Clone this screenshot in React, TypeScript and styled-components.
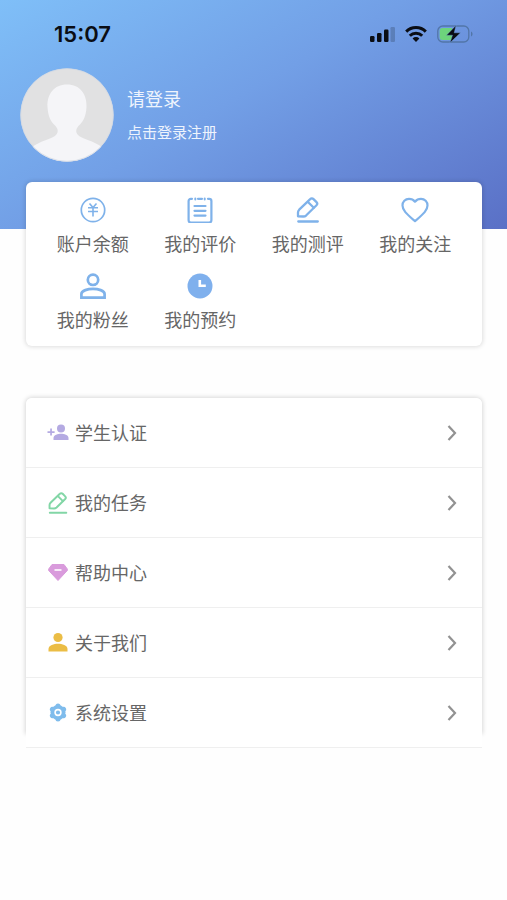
import React from "react";
import styled, { createGlobalStyle } from "styled-components";

const GlobalStyle = createGlobalStyle`
  * { box-sizing: border-box; }
  body {
    margin: 0;
    background: #fefefe;
    color: #666;
    font-family: "Liberation Sans", "Noto Sans CJK SC", sans-serif;
  }
  button { font: inherit; color: inherit; border: 0; padding: 0; background: none; cursor: pointer; }
  svg { display: block; flex: none; }
`;

const Page = styled.main`
  min-height: 100vh;
`;

const Header = styled.header`
  height: 229px;
  background: linear-gradient(150deg, #7fbff8 0%, #729fe6 45%, #5a70c6 100%);
`;

const StatusBar = styled.div`
  display: flex;
  align-items: center;
  justify-content: space-between;
  height: 68px;
  padding: 0 34px 0 54px;
  color: #0a0d14;
`;

const Clock = styled.time`
  font-family: Inter, sans-serif;
  font-size: 22px;
  font-weight: 600;
  line-height: 24px;
`;

const StatusIcons = styled.div`
  display: flex;
  align-items: center;
  gap: 10px;
`;

const Profile = styled.button`
  display: flex;
  align-items: center;
  gap: 13px;
  margin-left: 20px;
  text-align: left;
`;

const ProfileText = styled.span`
  display: flex;
  flex-direction: column;
  gap: 8px;
  padding-top: 2px;
  color: #eef4fd;
`;

const ProfileName = styled.span`
  font-size: 18px;
  line-height: 26px;
`;

const ProfileHint = styled.span`
  font-size: 15px;
  line-height: 24px;
`;

const ShortcutCard = styled.nav`
  display: grid;
  grid-template-columns: repeat(4, 1fr);
  row-gap: 16px;
  margin: -47px 25px 0 26px;
  padding: 15px 13px 13px;
  border-radius: 6px;
  background: #fff;
  box-shadow: 0 0 4px 1px rgba(0, 0, 0, 0.13);
`;

const Shortcut = styled.button`
  display: flex;
  flex-direction: column;
  align-items: center;
  gap: 10px;
  font-size: 18px;
  line-height: 24px;
  white-space: nowrap;
`;

const Menu = styled.nav`
  position: relative;
  margin: 52px 25px 0 26px;

  &::before {
    content: "";
    position: absolute;
    inset: 0 0 15px;
    border-radius: 6px 6px 0 0;
    box-shadow: 0 0 4px 1px rgba(0, 0, 0, 0.15);
  }
`;

const MenuList = styled.ul`
  position: relative;
  margin: 0;
  padding: 0;
  list-style: none;
  border-radius: 6px 6px 0 0;
  background: #fff;
`;

const MenuItem = styled.li`
  border-bottom: 1px solid #efefef;
`;

const MenuButton = styled.button`
  display: flex;
  align-items: center;
  gap: 6px;
  width: 100%;
  height: 69px;
  padding: 0 24px 0 21px;
  font-size: 18px;
  line-height: 24px;
  text-align: left;
`;

const MenuLabel = styled.span`
  flex: 1;
  padding-top: 2px;
`;

const BLUE = "#7fb2ea";

const Signal = () => (
  <svg width="26" height="16" viewBox="0 0 26 16" fill="currentColor" aria-hidden="true">
    <rect x="1" y="10" width="4.5" height="6" rx="1.2" />
    <rect x="8" y="7" width="4.5" height="9" rx="1.2" />
    <rect x="15" y="3.500" width="4.5" height="12.500" rx="1.2" />
    <rect x="21.500" y="1" width="4.5" height="15" rx="1.2" opacity="0.2" />
  </svg>
);

const Wifi = () => (
  <svg width="22" height="16" viewBox="0 0 22 16" fill="none" stroke="currentColor" strokeWidth="3" aria-hidden="true">
    <path d="M1.2 5.6a14 14 0 0 1 19.6 0" />
    <path d="M4.8 9.8a8.8 8.8 0 0 1 12.4 0" />
    <path d="M11 16l-3.4-3.5a4.8 4.8 0 0 1 6.8 0z" fill="currentColor" stroke="none" />
  </svg>
);

const Battery = () => (
  <svg width="36" height="18" viewBox="0 0 36 18" aria-hidden="true">
    <rect x="0.8" y="1" width="31" height="16" rx="5" fill="none" stroke="#5276a8" strokeWidth="1.3" />
    <path d="M34 6.5c2 .8 2 4.2 0 5z" fill="#5276a8" />
    <path d="M5.5 3H15v12H5.500A3 3 0 0 1 2.700 12V6A3 3 0 0 1 5.500 3z" fill="#6dd47c" />
    <path d="M19 .4L9.500 10.200h6l-2.500 7.600L23.500 7.800h-6.300z" fill="currentColor" stroke="#76a3e4" strokeWidth="0.4" />
  </svg>
);

const Avatar = () => (
  <svg width="94" height="94" viewBox="0 0 94 94" aria-hidden="true">
    <defs>
      <clipPath id="avatar-clip">
        <circle cx="47" cy="47" r="46.5" />
      </clipPath>
    </defs>
    <g clipPath="url(#avatar-clip)">
      <rect width="94" height="94" fill="#e1e1e2" />
      <path
        d="M47 16.500C34 16.500 27 26 27.500 39C28 48 30.500 53 34 56.500C38 60 39 63.500 36 67C32 71 20 73 12 79V94H82V79C74 73 62 71 58 67C55 63.500 56 60 60 56.500C63.500 53 66 48 66.500 39C67 26 60 16.500 47 16.500z"
        fill="#f5f5f8"
      />
    </g>
    <circle cx="47" cy="47" r="46.300" fill="none" stroke="#d3d9e3" strokeWidth="0.8" />
  </svg>
);

const Balance = () => (
  <svg width="26" height="26" viewBox="0 0 26 26" fill="none" stroke={BLUE} strokeWidth="1.7" aria-hidden="true">
    <circle cx="13" cy="13" r="11.700" />
    <path d="M9.500 6.500l3.500 4L16.500 6.500M8 10.800h10M8 14.500h10M13 10.500V19.500" strokeWidth="1.6" />
  </svg>
);

const Review = () => (
  <svg width="26" height="26" viewBox="0 0 26 26" fill="none" stroke={BLUE} strokeWidth="2.200" strokeLinecap="round" aria-hidden="true">
    <path d="M5 2.300H3.800A2.200 2.200 0 0 0 1.600 4.500V23.800a2.200 2.200 0 0 0 2.200 2.200H22.200a2.200 2.200 0 0 0 2.200-2.200V4.500a2.200 2.200 0 0 0-2.200-2.200H21" transform="translate(0 -.5)" />
    <path d="M11 1.800h4M7.500 9h11M7.500 13.800h11M7.500 18.600h11" />
    <path d="M8.300 1.500v1M17.700 1.500v1" strokeWidth="2" />
  </svg>
);

const Pencil = ({ size, color }: { size: number; color: string }) => (
  <svg width={size} height={size} viewBox="0 0 26 26" fill="none" stroke={color} strokeWidth="2.300" strokeLinejoin="round" strokeLinecap="round" aria-hidden="true">
    <path d="M3 19.300V15.500Q3 14 4.200 12.700L15.200 2.100a2.300 2.300 0 0 1 3.300 0l3 3a2.300 2.300 0 0 1 0 3.200L11.300 18.300Q10 19.500 8.300 19.500z" />
    <path d="M13.200 5.200l5.600 5.600M3.300 24.500H22.800" />
  </svg>
);

const Heart = () => (
  <svg width="28" height="26" viewBox="0 0 28 26" fill="none" stroke={BLUE} strokeWidth="2.200" strokeLinejoin="round" aria-hidden="true">
    <path d="M14 24.200L12.200 22.700C5.500 16.800 1.500 13.200 1.500 8.600A6.600 6.600 0 0 1 8 1.800C10.300 1.800 12.600 2.900 14 4.700C15.400 2.900 17.700 1.800 20 1.800A6.600 6.600 0 0 1 26.500 8.600C26.500 13.200 22.500 16.800 15.800 22.700z" />
  </svg>
);

const Fans = () => (
  <svg width="26" height="26" viewBox="0 0 26 26" fill="none" stroke={BLUE} strokeWidth="2.700" aria-hidden="true">
    <circle cx="13" cy="6.800" r="5.200" />
    <path d="M1.400 24.600V21C1.400 17.500 8 15.900 13 15.900S24.600 17.500 24.600 21V24.600z" />
  </svg>
);

const Booking = () => (
  <svg width="26" height="26" viewBox="0 0 26 26" fill="none" aria-hidden="true">
    <circle cx="13" cy="13" r="12.500" fill="#7fb0ed" />
    <path d="M12.800 7v5.800h6" stroke="#fff" strokeWidth="2.600" />
  </svg>
);

const AddStudent = () => (
  <svg width="22" height="22" viewBox="0 0 22 22" fill="#b4aae2" aria-hidden="true">
    <circle cx="14" cy="6.500" r="4" />
    <path d="M6.500 18V16C6.500 13 11 11.800 14 11.800S21.500 13 21.500 16V18z" />
    <path d="M3.200 6.500h1.700V9.200H7.600v1.700H4.900v2.700H3.200V10.900H.5V9.200H3.200z" />
  </svg>
);

const Help = () => (
  <svg width="22" height="22" viewBox="0 0 22 22" aria-hidden="true">
    <path d="M5 2.500H17L20.300 7V8.500L11 18.500L1.700 8.500V7z" fill="#d99bdc" stroke="#d99bdc" strokeLinejoin="round" />
    <path d="M7.500 8h7" stroke="#fff" strokeWidth="1.600" />
  </svg>
);

const About = () => (
  <svg width="22" height="22" viewBox="0 0 22 22" fill="#ebbd45" aria-hidden="true">
    <circle cx="11" cy="5.500" r="4.600" />
    <path d="M1.500 19.500V17C1.500 13.200 7 11.800 11 11.800S20.500 13.200 20.500 17V19.500z" />
  </svg>
);

const Settings = () => (
  <svg width="22" height="22" viewBox="0 0 22 22" aria-hidden="true">
    <circle cx="11" cy="10.500" r="7.500" fill="#7fbcec" />
    <g stroke="#7fbcec" strokeWidth="5" strokeLinecap="round">
      <path d="M11 4v13M5.400 7.250l11.200 6.500M5.400 13.750l11.200-6.500" />
    </g>
    <circle cx="11" cy="10.500" r="2.900" fill="none" stroke="#fff" strokeWidth="1.600" />
  </svg>
);

const Chevron = () => (
  <svg width="12" height="18" viewBox="0 0 12 18" fill="none" stroke="#929292" strokeWidth="2.200" aria-hidden="true">
    <path d="M2.500 2L9 9l-6.500 7" />
  </svg>
);

const shortcuts = [
  { label: "账户余额", icon: <Balance /> },
  { label: "我的评价", icon: <Review /> },
  { label: "我的测评", icon: <Pencil size={26} color={BLUE} /> },
  { label: "我的关注", icon: <Heart /> },
  { label: "我的粉丝", icon: <Fans /> },
  { label: "我的预约", icon: <Booking /> },
];

const menuItems = [
  { label: "学生认证", icon: <AddStudent /> },
  { label: "我的任务", icon: <Pencil size={22} color="#82d6a6" /> },
  { label: "帮助中心", icon: <Help /> },
  { label: "关于我们", icon: <About /> },
  { label: "系统设置", icon: <Settings /> },
];

export default function App() {
  return (
    <Page lang="zh-CN">
      <GlobalStyle />
      <Header>
        <StatusBar>
          <Clock>15:07</Clock>
          <StatusIcons>
            <Signal />
            <Wifi />
            <Battery />
          </StatusIcons>
        </StatusBar>
        <Profile type="button">
          <Avatar />
          <ProfileText>
            <ProfileName>请登录</ProfileName>
            <ProfileHint>点击登录注册</ProfileHint>
          </ProfileText>
        </Profile>
      </Header>
      <ShortcutCard>
        {shortcuts.map(({ label, icon }) => (
          <Shortcut type="button" key={label}>
            {icon}
            {label}
          </Shortcut>
        ))}
      </ShortcutCard>
      <Menu>
        <MenuList>
          {menuItems.map(({ label, icon }) => (
            <MenuItem key={label}>
              <MenuButton type="button">
                {icon}
                <MenuLabel>{label}</MenuLabel>
                <Chevron />
              </MenuButton>
            </MenuItem>
          ))}
        </MenuList>
      </Menu>
    </Page>
  );
}
